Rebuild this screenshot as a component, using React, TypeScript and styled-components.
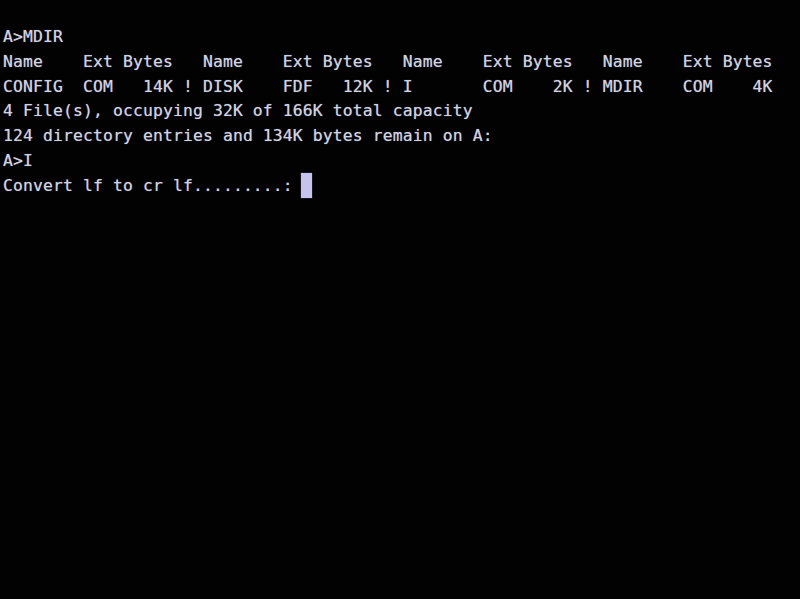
import React from "react";
import styled, { createGlobalStyle } from "styled-components";

const Global = createGlobalStyle`
  html, body {
    margin: 0;
    padding: 0;
    background: #000;
  }
  body {
    width: 800px;
    height: 599px;
    overflow: hidden;
  }
`;

const Screen = styled.div`
  width: 800px;
  height: 599px;
  box-sizing: border-box;
  background: #020203;
  padding: 25px 0 0 3px;
  display: flex;
  flex-direction: column;
  font-family: "DejaVu Sans Mono", "Liberation Mono", monospace;
  font-size: 16.4px;
  letter-spacing: 0.127px;
  color: #d2d2e2;
  text-shadow: 0 0 1px rgba(210, 210, 226, 0.6);
`;

const Line = styled.div`
  height: 24.75px;
  line-height: 24.75px;
  white-space: pre;
  display: flex;
  align-items: center;
`;

const Cursor = styled.span`
  display: inline-block;
  width: 11px;
  height: 25px;
  margin-left: -2px;
  background: #c4c4ec;
  box-shadow: 0 0 1px rgba(196, 196, 236, 0.7);
`;

const lines = [
  "A>MDIR",
  "Name    Ext Bytes   Name    Ext Bytes   Name    Ext Bytes   Name    Ext Bytes",
  "CONFIG  COM   14K ! DISK    FDF   12K ! I       COM    2K ! MDIR    COM    4K",
  "4 File(s), occupying 32K of 166K total capacity",
  "124 directory entries and 134K bytes remain on A:",
  "A>I",
];

export default function App() {
  return (
    <>
      <Global />
      <Screen>
        {lines.map((l, i) => (
          <Line key={i}>{l}</Line>
        ))}
        <Line>
          {"Convert lf to cr lf.........: "}
          <Cursor />
        </Line>
      </Screen>
    </>
  );
}
